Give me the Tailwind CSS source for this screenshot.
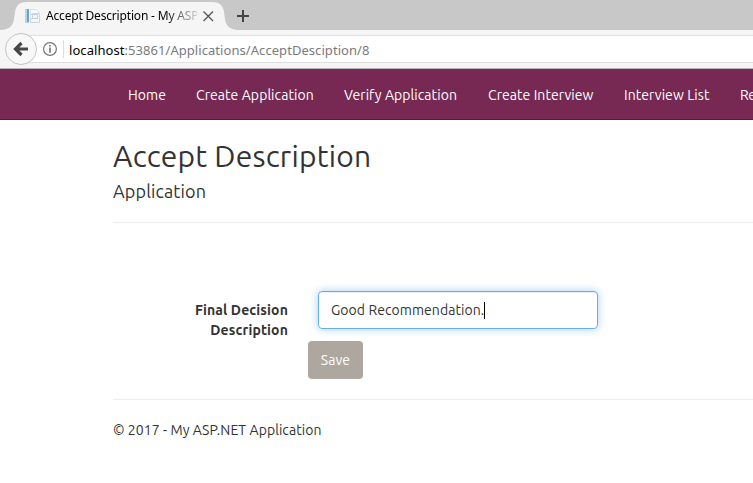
<!DOCTYPE html>
<html lang="en">
<head>
<meta charset="utf-8">
<title>Accept Description - My ASP.NET Application</title>
<script src="https://cdn.jsdelivr.net/npm/@tailwindcss/browser@4"></script>
</head>
<body class="w-[753px] h-[483px] overflow-hidden bg-white text-[#333333] font-['Ubuntu','Noto_Sans',sans-serif] text-[14px] leading-5 tracking-[0.07px]">
<header class="h-[69px] bg-[#f5f5f5] border-b border-[#b4b4b4] flex flex-col text-black font-['Noto_Sans',sans-serif]">
  <div class="h-[30px] shrink-0 bg-[#c8c8c8] relative">
    <svg class="absolute inset-0" width="260" height="30" viewBox="0 0 260 30" fill="none">
      <path d="M0 30C9 30 13 26 14 19L15 12C16 5 20 2 27 2H212C219 2 223 5 224 12L225 19C226 26 230 30 239 30Z" fill="#f5f5f5"/>
      <path d="M203.500 11.500L213 21M213 11.500L203.500 21" stroke="#555" stroke-width="1.300"/>
      <path d="M237 16H249M243 10V22" stroke="#444" stroke-width="2"/>
      <path d="M25 9H29V23H25Z" fill="#b5d5ec"/>
      <path d="M27 9H29V22H27Z" fill="#6aa3cf"/>
      <path d="M30.500 9.500H36.500L38.500 12V20H30.500Z" fill="#f8fafc" stroke="#dbe1e7"/>
      <path d="M32.500 13.500H39.500V22.500H30.500V18.500H32.500Z" fill="#f2f5f9" stroke="#cdd6df"/>
      <path d="M31 14.500H37.500V18.500H32" stroke="#c5d0db"/>
    </svg>
    <div class="relative flex h-full pt-[7px] pl-[46px]"><span class="w-[151px] overflow-hidden whitespace-nowrap text-[12px] leading-[18px] tracking-[-0.18px] bg-linear-to-r from-black from-78% to-black/15 bg-clip-text text-transparent">Accept Description - My ASP</span></div>
  </div>
  <div class="relative h-[38px] pt-[5px] pl-[20px]">
    <div class="h-[28px] bg-white border-y border-[#dfdfdf] flex items-center pl-[49px] pt-px text-[13px] tracking-[0.06px]"><span class="whitespace-nowrap">localhost<span class="text-[#7b7b7b]">:53861/Applications/AcceptDesciption/8</span></span></div>
    <svg class="absolute left-0 top-0" width="68" height="38" viewBox="0 30 68 38" fill="none">
      <circle cx="21" cy="49" r="15.500" fill="#f8f8f8" stroke="#c5c5c5"/>
      <path d="M28 49H16M21.500 43L15.500 49L21.500 55" stroke="#484848" stroke-width="3.200"/>
      <circle cx="50" cy="49" r="6.400" stroke="#777" stroke-width="1.200"/>
      <path d="M50 47.500V52.800M50 45V46.500" stroke="#666" stroke-width="1.500"/>
      <path d="M63.500 40V58" stroke="#ddd"/>
    </svg>
  </div>
</header>
<nav class="h-[51px] bg-[#772953] border-b border-[#511c39] pl-[128px] flex items-center gap-[30px] text-white whitespace-nowrap overflow-hidden pt-px">
  <a class="w-[38px] shrink-0">Home</a>
  <a class="w-[118px] shrink-0">Create Application</a>
  <a class="w-[114px] shrink-0">Verify Application</a>
  <a class="w-[106px] shrink-0">Create Interview</a>
  <a class="w-[86px] shrink-0">Interview List</a>
  <a class="shrink-0 tracking-[-0.5px]">Re</a>
</nav>
<main class="pl-[113px]">
  <h2 class="pt-[20px] text-[30px] leading-[33px] tracking-[0.2px]">Accept Description</h2>
  <h4 class="mt-[8px] text-[18px] leading-5 tracking-[0.13px]">Application</h4>
  <hr class="mt-[21px] border-[#eeeeee]">
  <form class="h-[118px] pt-[68px] flex gap-[30px]">
    <label class="w-[175px] pt-[9px] text-right font-bold tracking-[0.13px]">Final Decision<br>Description</label>
    <div class="w-[280px] h-[38px] rounded-[4px] border border-[#66afe9] shadow-[inset_0_1px_1px_rgba(0,0,0,0.075),0_0_8px_rgba(102,175,233,0.6)] flex items-center px-3"><span>Good Recommendation.</span><span class="w-px h-[17px] bg-black"></span></div>
  </form>
  <button class="block ml-[195px] w-[55px] h-[38px] rounded-[4px] bg-[#aea79f] text-white text-center">Save</button>
  <hr class="mt-[20px] border-[#eeeeee]">
  <p class="mt-[20px]">© 2017 - My ASP.NET Application</p>
</main>
</body>
</html>
